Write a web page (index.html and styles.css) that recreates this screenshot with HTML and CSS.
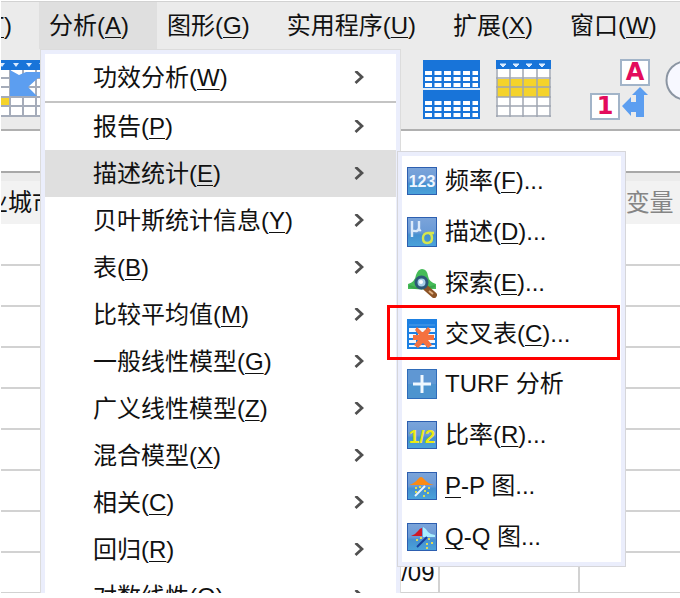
FILE: index.html
```html
<!DOCTYPE html>
<html lang="zh-CN">
<head>
<meta charset="utf-8">
<title>分析</title>
<link rel="stylesheet" href="styles.css">
</head>
<body>
<svg class="defs" aria-hidden="true">
  <defs>
    <linearGradient id="tile" x1="0" y1="0" x2="0" y2="1">
      <stop offset="0" stop-color="#7ba4da"/><stop offset=".5" stop-color="#6a9ad6"/><stop offset=".6" stop-color="#4590d0"/><stop offset="1" stop-color="#4aa3da"/>
    </linearGradient>
    <symbol id="chevron" viewBox="0 0 10 14"><path d="M1.5 0 8 6 1.5 12" fill="none" stroke="#505050" stroke-width="2.8"/></symbol>
  </defs>
</svg>
<div class="app">
  <nav class="menubar" aria-label="主菜单">
    <div class="entry entry-cut"><button class="top">(<u>T</u>)</button></div>
    <div class="entry">
      <button class="top active">分析(<u>A</u>)</button>
      <ul class="menu">
        <li class="ruled"><button class="item">功效分析(<u>W</u>)<svg class="chev"><use href="#chevron"/></svg></button></li>
        <li><button class="item">报告(<u>P</u>)<svg class="chev"><use href="#chevron"/></svg></button></li>
        <li class="open"><button class="item">描述统计(<u>E</u>)<svg class="chev"><use href="#chevron"/></svg></button>
          <ul class="submenu">
            <li><button class="sub"><svg class="icon" viewBox="0 0 30 28"><rect x=".5" y=".5" width="29" height="27" fill="url(#tile)" stroke="#2d5fb0"/><text x="15" y="20" text-anchor="middle" class="digits">123</text></svg><span>频率(<u>F</u>)...</span></button></li>
            <li><button class="sub"><svg class="icon" viewBox="0 0 30 30"><rect x=".5" y=".5" width="29" height="29" fill="url(#tile)" stroke="#2d5fb0" /><path d="M5 4v16M5 13q6 3 7-2V4M12 11q0 3 2 2" fill="none" stroke="#dceafa" stroke-width="2.4"/><path d="M27 16h-6q-5 0-5 5 0 5 4 5 5 0 5-5 0-4-3-5" fill="none" stroke="#d5e64e" stroke-width="2.4"/></svg><span>描述(<u>D</u>)...</span></button></li>
            <li><button class="sub"><svg class="icon" viewBox="0 0 30 30"><path d="M1 21V16Q8 14 9 7 11 1 15 1q5 0 6 7 1 6 8 8v5Z" fill="#45bb58"/><path d="M2 18q12 5 26 0" fill="none" stroke="#3aa44c" stroke-width="2"/><path d="m19 20 8 7" stroke="#8c5326" stroke-width="6" stroke-linecap="round"/><path d="m22 23 4 3" stroke="#dfae7e" stroke-width="2"/><circle cx="14.500" cy="14.500" r="5.500" fill="#a8cfe8" stroke="#2c5878" stroke-width="3"/><circle cx="14" cy="14" r="2" fill="#fff"/></svg><span>探索(<u>E</u>)...</span></button></li>
            <li class="marked"><button class="sub"><svg class="icon" viewBox="0 0 30 30"><rect width="30" height="30" fill="#1d80e2"/><path d="M2 6h26" stroke="#529fea"/><path d="M2 9h7v4H2zM11 9h8v4h-8zM21 9h7v4h-7zM2 15h7v4H2zM11 15h8v4h-8zM21 15h7v4h-7zM2 21h7v3H2zM11 21h8v3h-8zM21 21h7v3h-7zM2 26h7v2H2zM11 26h8v2h-8zM21 26h7v2h-7z" fill="#f1f7fd"/><path d="M10 8l5 5 1 0 5-5 3 3-3 5h6v5h-6l4 5-4 3-5-5-5 5-4-3 4-5H6v-5h6L8 11Z" fill="#f5713f"/></svg><span>交叉表(<u>C</u>)...</span></button></li>
            <li><button class="sub"><svg class="icon" viewBox="0 0 30 30"><rect x=".5" y=".5" width="29" height="29" fill="#5f97d3" stroke="#2f6cba"/><path d="M1 15h28v14H1z" fill="#4d94cf"/><path d="M15 6v18M6 15h18" stroke="#f0f8ff" stroke-width="3"/></svg><span>TURF 分析</span></button></li>
            <li><button class="sub"><svg class="icon" viewBox="0 0 30 28"><rect x=".5" y=".5" width="29" height="27" fill="url(#tile)" stroke="#2d5fb0"/><text x="15" y="22" text-anchor="middle" class="half">1/2</text></svg><span>比率(<u>R</u>)...</span></button></li>
            <li><button class="sub"><svg class="icon" viewBox="0 0 30 28"><rect x=".5" y=".5" width="29" height="27" fill="url(#tile)" stroke="#2d5fb0"/><path d="M2 13q6-2 9-6 3-4 6 0 4 5 10 6Z" fill="#fb8a14"/><path d="m8 24 10-10" stroke="#e7f3ff" stroke-width="2"/><path d="M8 16h2m2-1h2m-6 5h2m7-1h2m2-3h2m-3 5h2m-6 3h2" stroke="#d9dd55" stroke-width="2"/></svg><span><u>P</u>-P 图...</span></button></li>
            <li><button class="sub"><svg class="icon" viewBox="0 0 30 28"><rect x=".5" y=".5" width="29" height="27" fill="url(#tile)" stroke="#2d5fb0"/><path d="M4 13q5-2 7-5 2-3 4-3v8Z" fill="#d01826"/><path d="M16 4q4 2 5 5 3 3 7 3v2H16Z" fill="#a9eeff"/><path d="m10 24 10-10" stroke="#153f9c" stroke-width="2"/><path d="M9 17h2m2-2h2m6 1h2m1 4h2m-7 1h2m-2 4h2" stroke="#dfd958" stroke-width="2"/></svg><span><u>Q</u>-Q 图...</span></button></li>
          </ul>
        </li>
        <li><button class="item">贝叶斯统计信息(<u>Y</u>)<svg class="chev"><use href="#chevron"/></svg></button></li>
        <li><button class="item">表(<u>B</u>)<svg class="chev"><use href="#chevron"/></svg></button></li>
        <li><button class="item">比较平均值(<u>M</u>)<svg class="chev"><use href="#chevron"/></svg></button></li>
        <li><button class="item">一般线性模型(<u>G</u>)<svg class="chev"><use href="#chevron"/></svg></button></li>
        <li><button class="item">广义线性模型(<u>Z</u>)<svg class="chev"><use href="#chevron"/></svg></button></li>
        <li><button class="item">混合模型(<u>X</u>)<svg class="chev"><use href="#chevron"/></svg></button></li>
        <li><button class="item">相关(<u>C</u>)<svg class="chev"><use href="#chevron"/></svg></button></li>
        <li><button class="item">回归(<u>R</u>)<svg class="chev"><use href="#chevron"/></svg></button></li>
        <li><button class="item">对数线性(<u>O</u>)<svg class="chev"><use href="#chevron"/></svg></button></li>
      </ul>
    </div>
    <div class="entry"><button class="top">图形(<u>G</u>)</button></div>
    <div class="entry"><button class="top">实用程序(<u>U</u>)</button></div>
    <div class="entry"><button class="top">扩展(<u>X</u>)</button></div>
    <div class="entry"><button class="top">窗口(<u>W</u>)</button></div>
  </nav>

  <div class="toolbar">
    <button class="tool tool-first" aria-label="插入变量"><svg width="52" height="58" viewBox="0 0 52 58"><path d="M0 0h52v57H0z" fill="#fff"/><path d="M0 37h9v8H0z" fill="#f5d32b"/><path d="M0 18h52M0 27h52M0 37h52M0 46h52M0 56h52M9 10v47M22 10v47M35 10v47M48 10v47" stroke="#a5acba" stroke-width="2"/><path d="M0 0h52v10H0z" fill="#1874d9"/><path d="m-2 3h6l-3 4zm14 0h6l-3 4zm13 0h6l-3 4zm13 0h6l-3 4z" fill="#d8eaff"/><path d="M9 10 18 15 25 12h27v6H37L27 27l9 9H9Z" fill="#5c9ef0"/></svg></button>
    <button class="tool tool-split" aria-label="拆分文件"><svg width="57" height="59" viewBox="0 0 57 59"><path d="M0 0h57v59H0z" fill="#1874d9"/><path d="M0 29h57" stroke="#dcebfa" stroke-width="2"/><path d="M2 13h53M2 19h53M2 25h53M2 43h53M2 49h53M2 55h53" stroke="#fff" stroke-width="4" stroke-dasharray="7 2.500"/></svg></button>
    <button class="tool tool-select" aria-label="选择个案"><svg width="55" height="57" viewBox="0 0 55 57"><path d="M0 0h55v57H0z" fill="#fff"/><path d="M1 19h53v18H1z" fill="#f5d32b"/><path d="M0 18h55M0 27h55M0 37h55M0 46h55M0 56h55M1 9v48M14 9v48M27 9v48M41 9v48M54 9v48" stroke="#a0a6b2" stroke-width="1.500"/><path d="M0 0h55v9H0z" fill="#1874d9"/><path d="M4 4h6l-3 3zm13 0h6l-3 3zm13 0h6l-3 3zm13 0h6l-3 3z" fill="#d8eaff" stroke="#d8eaff"/></svg></button>
    <button class="tool tool-labels" aria-label="值标签"><svg width="61" height="62" viewBox="0 0 61 62"><rect x="31" y="0" width="28" height="25" fill="#fff" stroke="#a2b4c8" stroke-width="2"/><rect x="1" y="34" width="28" height="25" fill="#fff" stroke="#a2b4c8" stroke-width="2"/><text x="45" y="20" text-anchor="middle" class="glyph">A</text><text x="15" y="54" text-anchor="middle" class="glyph">1</text><path d="M50 27l8 8h-4v22h-8v-5h-5v4l-9-10 9-9v5h5v-7h-4Z" fill="#5c9ef0"/></svg></button>
    <button class="tool" aria-label="变量集"><svg width="41" height="41" viewBox="0 0 41 41"><circle cx="20.500" cy="20.500" r="19" fill="#f7f8ff" stroke="#8b95a2" stroke-width="2"/></svg></button>
  </div>

  <div class="editline"></div>

  <table class="grid">
    <colgroup><col class="wide"><col><col><col><col></colgroup>
    <thead><tr><th class="city">企业城市</th><th></th><th></th><th></th><th class="empty">变量</th></tr></thead>
    <tbody>
      <tr><td></td><td></td><td></td><td></td><td></td></tr>
      <tr><td></td><td></td><td></td><td></td><td></td></tr>
      <tr><td></td><td></td><td></td><td></td><td></td></tr>
      <tr><td></td><td></td><td></td><td></td><td></td></tr>
      <tr><td></td><td></td><td></td><td></td><td></td></tr>
      <tr><td></td><td></td><td></td><td></td><td></td></tr>
      <tr><td></td><td></td><td></td><td></td><td></td></tr>
      <tr><td></td><td></td><td></td><td></td><td></td></tr>
      <tr><td></td><td></td><td>/09</td><td></td><td></td></tr>
    </tbody>
  </table>
</div>
</body>
</html>
```
FILE: styles.css
```css
* { box-sizing: border-box; }

body {
  margin: 0;
  padding: 1px 0 5px 1px;
  height: 100vh;
  overflow: hidden;
  background: #fff;
  color: #111;
  font: 24px/28px "Liberation Sans", "Noto Sans CJK SC", sans-serif;
}

button {
  margin: 0;
  padding: 0;
  border: 0;
  background: none;
  color: inherit;
  font: inherit;
  white-space: nowrap;
}

u {
  text-decoration-thickness: 1px;
  text-underline-offset: 3px;
  text-decoration-skip-ink: none;
}

ul { margin: 0; padding: 0; list-style: none; }
svg { display: block; flex: none; }
.defs { position: absolute; width: 0; height: 0; }

.app {
  height: 100%;
  overflow: hidden;
  background: #fff;
}

/* Menu bar */
.menubar {
  display: flex;
  height: 48px;
  border-top: 1px solid #d2d2d2;
  background: #ebebeb;
}
.entry { position: relative; flex: none; }
.entry-cut {
  display: flex;
  justify-content: flex-end;
  width: 38px;
  overflow: hidden;
}
.top { height: 100%; padding: 0 27px 0 10px; }
.top.active { padding-right: 28px; background: #dfdfdf; }

/* Drop-down */
.menu {
  position: absolute;
  z-index: 2;
  top: calc(100% + 1px);
  left: 2px;
  width: 359px;
  border: 4px solid #ebeefc;
  background: #fff;
  box-shadow: 0 0 0 1px #dcdcdc;
}
.ruled { border-bottom: 2px solid #c4c4c4; }
.open { position: relative; background: #dfdfdf; }
.item {
  display: flex;
  align-items: center;
  width: 100%;
  height: 47px;
  padding: 0 32px 0 48px;
}
.chev { width: 10px; height: 14px; margin-left: auto; }

.submenu {
  position: absolute;
  top: 2px;
  left: calc(100% + 2px);
  display: grid;
  grid-auto-rows: 1fr;
  width: 227px;
  height: 414px;
  border: 4px solid #ebeefc;
  background: #fff;
  box-shadow: 0 0 0 1px #d6d6da;
}
.sub {
  display: flex;
  align-items: center;
  gap: 8px;
  width: 100%;
  height: 100%;
  padding-left: 5px;
}
.icon { width: 30px; height: 30px; }
.marked { position: relative; }
.marked::after {
  content: "";
  position: absolute;
  inset: -3px 1px -1px -15px;
  border: 3px solid #f00;
}

.digits { fill: #eef6ff; font: bold 16px "Liberation Sans", sans-serif; }
.half { fill: #eaea16; font: bold 19px "Liberation Sans", sans-serif; }
.glyph { fill: #e30b5c; font: bold 24px "DejaVu Sans", sans-serif; }

/* Toolbar */
.toolbar {
  display: flex;
  align-items: flex-start;
  height: 82px;
  padding-top: 11px;
  border-bottom: 2px solid #b0b0b0;
  background: #ebebeb;
  overflow: hidden;
}
.toolbar svg { overflow: visible; }
.tool { flex: none; }
.tool-first { margin-right: 370px; }
.tool-split { margin-right: 16px; }
.tool-select { margin-right: 39px; }
.tool-labels { margin-right: 14px; }

.editline {
  height: 50px;
  border-bottom: 8px solid #ebebeb;
  background: #fff;
  box-shadow: inset 0 -2px #a8a8a8;
}

/* Data grid */
.grid {
  width: 846px;
  margin-left: -126px;
  table-layout: fixed;
  border-collapse: collapse;
}
.grid .wide { width: 282px; }
.grid th {
  height: 43px;
  padding: 0;
  background: #f2f2f2;
  font-weight: normal;
}
.grid .city { padding-right: 16px; }
.grid .empty { color: #858585; }
.grid td {
  height: 41px;
  padding: 0 3px;
  border: solid #d2d2d2;
  border-width: 0 2px 2px 0;
  text-align: right;
}
```
